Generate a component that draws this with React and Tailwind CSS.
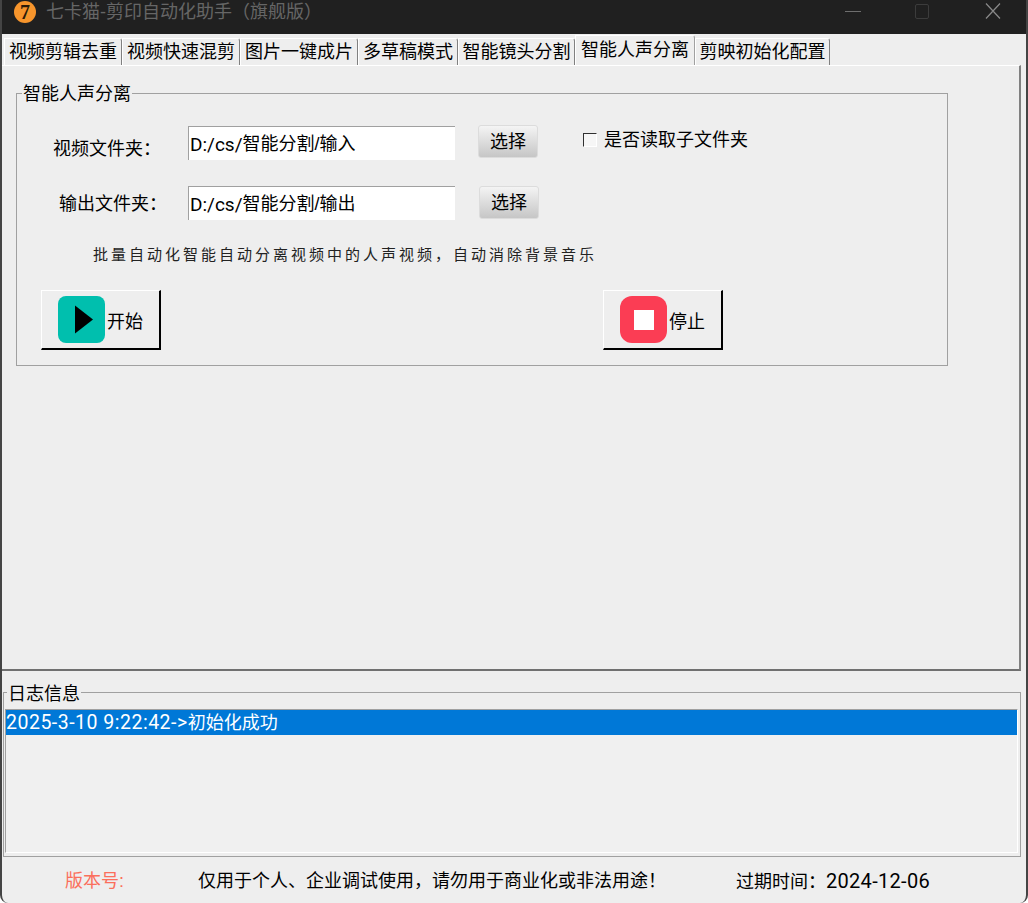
import React from "react";

const FONT = "font-['Liberation_Sans','Noto_Sans_CJK_SC',sans-serif]";
const LATIN = "font-['Roboto',sans-serif]";

const tabs = [
  { label: "视频剪辑去重", width: "w-[118px]" },
  { label: "视频快速混剪", width: "w-[118px]" },
  { label: "图片一键成片", width: "w-[118px]" },
  { label: "多草稿模式", width: "w-[100px]" },
  { label: "智能镜头分割", width: "w-[117px]" },
  { label: "智能人声分离", width: "w-[120px]", active: true },
  { label: "剪映初始化配置", width: "w-[135px]" },
];

const TitleBar = () => (
  <div className="flex h-[34px] shrink-0 items-start bg-[#202020] pt-[1px] pl-[14px]">
    <div className="flex h-[22px] w-[22px] items-center justify-center rounded-full bg-[#f7952c] font-['Liberation_Serif',serif] text-[20px] leading-none font-bold text-[#2a1a08]">
      7
    </div>
    <span className="mt-[1px] ml-[10px] text-[18px] leading-[20px] text-[#666666]">
      七卡猫-剪印自动化助手（旗舰版）
    </span>
    <div className="ml-auto flex items-center pt-[2px]">
      <svg width="16" height="16" viewBox="0 0 16 16" className="mr-[53px]">
        <path d="M0 8.5h16" stroke="#6e6e6e" strokeWidth="1" />
      </svg>
      <svg width="16" height="16" viewBox="0 0 16 16" className="mr-[55px]">
        <rect x="1.5" y="1.5" width="13" height="14" rx="1.5" fill="none" stroke="#3c3c3c" />
      </svg>
      <svg width="16" height="16" viewBox="0 0 16 16" className="mr-[27px]">
        <path d="M1 .5l14 15M15 .5L1 15.5" stroke="#8a8a8a" strokeWidth="1.2" />
      </svg>
    </div>
  </div>
);

const TabBar = () => (
  <div className="flex h-[31px] shrink-0 items-end pl-[2px]">
    {tabs.map((tab) => (
      <div
        key={tab.label}
        className={
          tab.active
            ? `flex h-[30px] ${tab.width} items-start justify-center rounded-tr-[3px] border-t border-l border-white border-r border-r-[#a0a0a0] bg-[#eeeeee] pt-[1px] text-[18px] leading-[26px] text-black`
            : `flex h-[27px] ${tab.width} items-start justify-center rounded-tr-[3px] border-t border-l border-white border-r border-r-[#808080] bg-[#eeeeee] text-[18px] leading-[26px] text-black`
        }
      >
        {tab.label}
      </div>
    ))}
  </div>
);

const PathRow = ({ label, labelClass, prefix, value, buttonClass, children, rowClass }) => (
  <div className={`flex items-start ${rowClass}`}>
    <span className={`shrink-0 text-[18px] leading-[26px] text-black ${labelClass}`}>{label}</span>
    <div className="flex h-[34px] w-[267px] shrink-0 items-center border-t border-l border-[#a0a0a0] bg-white pt-[1px] pl-[1px] text-[18px] leading-none text-black">
      <span className={`${LATIN} text-[19px]`}>{prefix}</span>
      {value}
    </div>
    <button
      className={`flex h-[33px] w-[60px] shrink-0 items-center justify-center rounded-[3px] border border-[#dcdcdc] bg-gradient-to-b from-[#f4f4f4] to-[#c6c6c6] pt-[1px] text-[18px] text-black ${buttonClass}`}
    >
      选择
    </button>
    {children}
  </div>
);

const BigButton = ({ label, children }) => (
  <button className="flex h-[60px] w-[120px] items-center border-t border-l border-white border-r-2 border-b-2 border-r-black border-b-black bg-[#eeeeee] pl-[16px] text-[18px] text-black">
    {children}
    <span className="ml-[2px] pt-[5px]">{label}</span>
  </button>
);

const PlayIcon = () => (
  <svg width="47" height="47" viewBox="0 0 47 47">
    <rect width="47" height="47" rx="8" fill="#00bfae" />
    <path d="M17 9.5l18 14-18 14z" fill="#000" />
  </svg>
);

const StopIcon = () => (
  <svg width="47" height="47" viewBox="0 0 47 47">
    <rect width="47" height="47" rx="12" fill="#fb3d54" />
    <rect x="14" y="14" width="20" height="20" fill="#fff" />
  </svg>
);

const App = () => {
  return (
    <div className={`flex h-[903px] w-[1028px] flex-col overflow-hidden rounded-b-[8px] border-x-2 border-x-[#444444] bg-[#eeeeee] ${FONT}`}>
      <div className="-mx-[2px]">
        <TitleBar />
      </div>
      <TabBar />

      {/* Main panel */}
      <div className="mr-[5px] h-[606px] shrink-0 border-t border-white border-r-2 border-r-[#808080] border-b-2 border-b-[#707070] pt-[27px] pl-[14px]">
        <div className="relative h-[273px] w-[932px] border border-[#a0a0a0] pt-[32px]">
          <span className="absolute -top-[12px] left-[5px] bg-[#eeeeee] px-[1px] text-[18px] leading-[24px] text-black">
            智能人声分离
          </span>

          <PathRow
            label="视频文件夹："
            labelClass="mt-[10px] ml-[36px] w-[135px]"
            prefix="D:/cs/"
            value="智能分割/输入"
            buttonClass="-mt-[1px] ml-[23px]"
          >
            <div className="mt-[7px] ml-[45px] h-[14px] w-[14px] border border-t-[#303030] border-r-white border-b-white border-l-[#303030] bg-[#f6f6f6]" />
            <span className="mt-[1px] ml-[7px] text-[18px] leading-[26px] text-black">是否读取子文件夹</span>
          </PathRow>

          <PathRow
            rowClass="mt-[24px]"
            label="输出文件夹："
            labelClass="mt-[5px] ml-[42px] w-[129px]"
            prefix="D:/cs/"
            value="智能分割/输出"
            buttonClass="ml-[24px]"
          />

          <p className="mt-[22px] ml-[76px] text-[15px] leading-[26px] tracking-[3px] text-[#222222]">
            批量自动化智能自动分离视频中的人声视频，自动消除背景音乐
          </p>

          <div className="mt-[22px] ml-[24px] flex gap-[442px]">
            <BigButton label="开始">
              <PlayIcon />
            </BigButton>
            <BigButton label="停止">
              <StopIcon />
            </BigButton>
          </div>
        </div>
      </div>

      {/* Log panel */}
      <div className="relative mt-[21px] mr-[5px] ml-[1px] h-[165px] shrink-0 border border-[#a0a0a0] pt-[16px] pl-[1px]">
        <span className="absolute -top-[11px] left-[3px] bg-[#eeeeee] px-[1px] text-[18px] leading-[24px] text-black">
          日志信息
        </span>
        <div className="mr-[2px] h-[144px] border border-t-[#a0a0a0] border-r-white border-b-white border-l-[#a0a0a0] bg-[#f0f0f0]">
          <div className="h-[25px] bg-[#0078d7] text-[18px] leading-[25px] text-white">
            <span className={`${LATIN} text-[19.5px] tracking-[0.5px]`}>2025-3-10 9:22:42-&gt;</span>初始化成功
          </div>
        </div>
      </div>

      {/* Status bar */}
      <div className="flex min-h-0 flex-1 items-center pt-[2px] pl-[63px] text-[18px] text-black">
        <span className="w-[133px] text-[#fb6f5c]">版本号:</span>
        <span className="w-[538px]">仅用于个人、企业调试使用，请勿用于商业化或非法用途！</span>
        <span>
          过期时间：<span className={`${LATIN} text-[20px] tracking-[0.3px]`}>2024-12-06</span>
        </span>
      </div>
    </div>
  );
};

export default App;
